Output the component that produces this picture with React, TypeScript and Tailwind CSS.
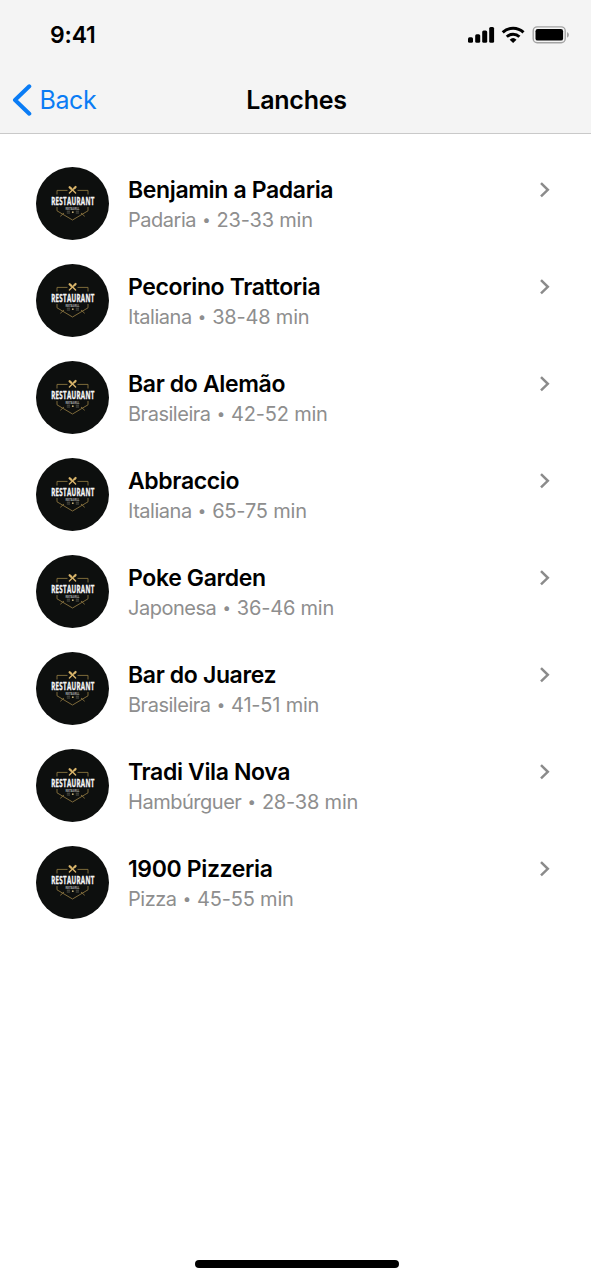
type Restaurant = {
  name: string;
  kind: string;
  time: string;
};

const restaurants: Restaurant[] = [
  { name: "Benjamin a Padaria", kind: "Padaria", time: "23-33 min" },
  { name: "Pecorino Trattoria", kind: "Italiana", time: "38-48 min" },
  { name: "Bar do Alemão", kind: "Brasileira", time: "42-52 min" },
  { name: "Abbraccio", kind: "Italiana", time: "65-75 min" },
  { name: "Poke Garden", kind: "Japonesa", time: "36-46 min" },
  { name: "Bar do Juarez", kind: "Brasileira", time: "41-51 min" },
  { name: "Tradi Vila Nova", kind: "Hambúrguer", time: "28-38 min" },
  { name: "1900 Pizzeria", kind: "Pizza", time: "45-55 min" },
];

function StatusIcons() {
  return (
    <svg width="103" height="20" viewBox="0 0 103 20" className="block">
      <g fill="#000">
        <rect x="2" y="12.2" width="5" height="5.6" rx="1.5" />
        <rect x="9.2" y="9.2" width="5" height="8.6" rx="1.5" />
        <rect x="16.2" y="5.6" width="5" height="12.2" rx="1.5" />
        <rect x="23.2" y="2" width="4.9" height="15.8" rx="1.5" />
      </g>
      <g fill="none" stroke="#000" strokeWidth="3">
        <path d="M36.7 7.3 A15.2 15.2 0 0 1 57.5 7.3" />
        <path d="M40.8 11.8 A9 9 0 0 1 53.4 11.8" />
      </g>
      <path d="M43.7 14.7 A5 5 0 0 1 50.5 14.7 L47.1 18.1 Z" fill="#000" />
      <rect x="67.2" y="1.9" width="32" height="15.9" rx="4" fill="none" stroke="#a3a3a3" strokeWidth="1.4" />
      <rect x="69.5" y="4.1" width="27.6" height="11.5" rx="2.2" fill="#000" />
      <path d="M101 7 Q103 8 103 9.8 Q103 11.7 101 12.8 Z" fill="#a3a3a3" />
    </svg>
  );
}

function Avatar() {
  return (
    <svg width="73" height="73" viewBox="0 0 73 73" className="block shrink-0">
      <circle cx="36.5" cy="36.5" r="36.5" fill="#0d0f0e" />
      <g fill="none" stroke="#8a7440" strokeWidth="0.9">
        <path d="M21 27.5 V23.4 H31.5 M41.5 23.4 H52 V27.5" />
        <path d="M21 40 V43.8 L36.5 53 L52 43.8 V40" />
        <path d="M24.3 49.3 L28 46 M48.7 49.3 L45 46" />
      </g>
      <g stroke="#d8b46a" strokeLinecap="round" fill="none">
        <path d="M34.2 20.6 L39.6 26 M39 20.6 L33.4 26" strokeWidth="1.4" />
        <path d="M33.6 20.2 L35.2 21.8 M38.4 21.2 L39.6 20" strokeWidth="2.2" />
      </g>
      <g fontFamily="'Open Sans', sans-serif" fontWeight="700">
        <g transform="translate(15.2 37.6) scale(0.595 1)">
          <text fontSize="10.4" letterSpacing="0.5" fill="#f5f5f5" stroke="#f5f5f5" strokeWidth="0.35">
            RESTAURANT
          </text>
        </g>
        <g transform="translate(29.5 42.7) scale(0.65 1)">
          <text fontSize="3.6" fill="#b5b5b5">REST&amp;GRILL</text>
        </g>
      </g>
      <g stroke="#66645b" strokeWidth="0.8">
        <path d="M30.8 44.2 H34 M30.8 46 H34 M39.8 44.2 H43 M39.8 46 H43" />
      </g>
      <circle cx="36.8" cy="45.2" r="0.9" fill="#c8b27a" />
    </svg>
  );
}

function Row({ name, kind, time }: Restaurant) {
  return (
    <li className="flex h-[73px]">
      <Avatar />
      <div className="ml-[19px] flex-1 pt-2">
        <div className="text-[23px] leading-[30px] font-semibold tracking-[-0.36px] text-black">{name}</div>
        <div className="flex text-[20px] leading-[30px] tracking-[-0.2px] text-[#8e8e8e]">
          <span className="tracking-[-0.48px]">{kind}</span>
          <span className="w-[20.5px] text-center text-[15px]">•</span>
          <span>{time}</span>
        </div>
      </div>
      <svg width="12" height="18" viewBox="0 0 12 18" className="mt-[14px] mr-[1.5px] block shrink-0">
        <path d="M2 2.2 L8.8 8.8 L2 15.4" fill="none" stroke="#8b8b8b" strokeWidth="2.5" />
      </svg>
    </li>
  );
}

export default function App() {
  return (
    <div className="flex h-[1280px] w-[591px] flex-col overflow-hidden bg-white font-['Inter',sans-serif]">
      <header className="h-[134px] border-b border-[#c9c9c9] bg-[#f4f4f4]">
        <div className="flex h-[70px] items-center justify-between pr-[22px] pl-[50px]">
          <span className="text-[23px] leading-[28px] font-semibold tracking-[-0.2px]">9:41</span>
          <StatusIcons />
        </div>
        <div className="grid h-[60px] grid-cols-[1fr_auto_1fr] items-center">
          <div className="flex items-center pl-3 text-[#0a7cf5]">
            <svg width="20" height="34" viewBox="0 0 20 34" className="block">
              <path d="M17.3 3.3 L3 17 L17.3 30.7" fill="none" stroke="currentColor" strokeWidth="4" strokeLinecap="round" strokeLinejoin="round" />
            </svg>
            <span className="ml-[7.5px] text-[25px] leading-[32px] tracking-[-0.4px]">Back</span>
          </div>
          <h1 className="ml-[2px] text-[25px] leading-[32px] font-semibold tracking-[-0.25px]">Lanches</h1>
        </div>
      </header>
      <ul className="flex flex-1 flex-col gap-6 pt-[33px] pr-[39px] pl-9">
        {restaurants.map((r) => (
          <Row key={r.name} {...r} />
        ))}
      </ul>
      <div className="mb-[12px] ml-[195px] h-2 w-[204px] rounded-full bg-black" />
    </div>
  );
}
